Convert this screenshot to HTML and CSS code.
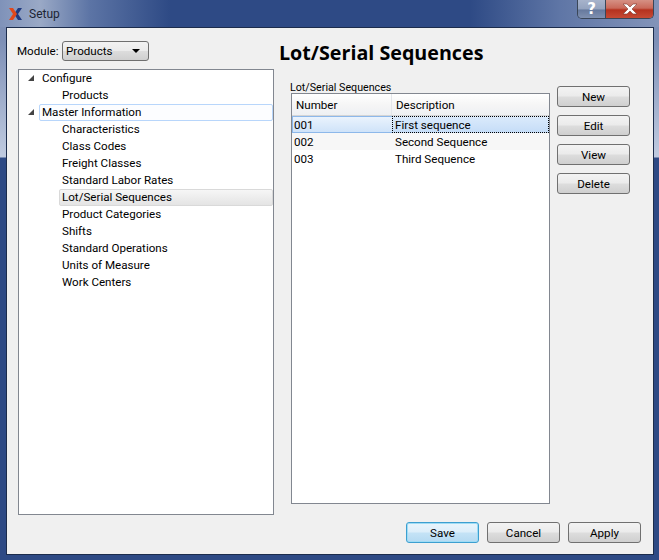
FILE: index.html
```html
<!DOCTYPE html>
<html lang="en">
<head>
<meta charset="utf-8">
<title>Setup</title>
<link rel="stylesheet" href="styles.css">
</head>
<body>
<div class="window">
  <header class="titlebar">
    <svg class="app-icon" width="14" height="12" viewBox="0 0 14 12">
      <polygon points="9,0 13,0 9,6 13,12 9,12 5,6" fill="#1f3a80"/>
      <polygon points="0,0 4,0 8,6 4,12 0,12 4,6" fill="#e0481c"/>
    </svg>
    <span class="title">Setup</span>
    <div class="caption">
      <div class="cap cap-help">?</div>
      <div class="cap cap-close">
        <svg width="16" height="12" viewBox="0 0 16 12">
          <path d="M1 1h4l3 3 3-3h4l-5 5 5 5h-4L8 8l-3 3H1l5-5z" fill="#fff" stroke="#7a3a30" stroke-width=".6"/>
        </svg>
      </div>
    </div>
  </header>
  <main class="client">
    <div class="top">
      <section class="left">
        <div class="module">
          <label class="module-label">Module:</label>
          <div class="combo">
            <span>Products</span>
            <i class="combo-arrow"></i>
          </div>
        </div>
        <div class="tree">
          <div class="node"><svg class="twist" width="8" height="8" viewBox="0 0 8 8"><polygon points="7,1 7,7 1,7" fill="#444"/></svg><span class="cell">Configure</span></div>
          <div class="node child"><span class="cell">Products</span></div>
          <div class="node"><svg class="twist" width="8" height="8" viewBox="0 0 8 8"><polygon points="7,1 7,7 1,7" fill="#444"/></svg><span class="cell current">Master Information</span></div>
          <div class="node child"><span class="cell">Characteristics</span></div>
          <div class="node child"><span class="cell">Class Codes</span></div>
          <div class="node child"><span class="cell">Freight Classes</span></div>
          <div class="node child"><span class="cell">Standard Labor Rates</span></div>
          <div class="node child"><span class="cell selected">Lot/Serial Sequences</span></div>
          <div class="node child"><span class="cell">Product Categories</span></div>
          <div class="node child"><span class="cell">Shifts</span></div>
          <div class="node child"><span class="cell">Standard Operations</span></div>
          <div class="node child"><span class="cell">Units of Measure</span></div>
          <div class="node child"><span class="cell">Work Centers</span></div>
        </div>
      </section>
      <section class="right">
        <h1 class="heading">Lot/Serial Sequences</h1>
        <div class="panel">
          <div class="group">
            <div class="group-label">Lot/Serial Sequences</div>
            <div class="table">
              <div class="thead">
                <div class="th col-num">Number</div>
                <div class="th col-desc">Description</div>
              </div>
              <div class="row row-sel">
                <div class="td col-num num-sel">001</div>
                <div class="td col-desc desc-sel">First sequence</div>
              </div>
              <div class="row row-alt">
                <div class="td col-num">002</div>
                <div class="td col-desc">Second Sequence</div>
              </div>
              <div class="row">
                <div class="td col-num">003</div>
                <div class="td col-desc">Third Sequence</div>
              </div>
            </div>
          </div>
          <div class="actions">
            <button class="btn">New</button>
            <button class="btn">Edit</button>
            <button class="btn">View</button>
            <button class="btn">Delete</button>
          </div>
        </div>
      </section>
    </div>
    <footer class="footer">
      <button class="btn btn-default">Save</button>
      <button class="btn">Cancel</button>
      <button class="btn">Apply</button>
    </footer>
  </main>
</div>
</body>
</html>
```

FILE: styles.css
```css
* { box-sizing: border-box; }
html, body { margin: 0; padding: 0; }
body {
  width: 659px;
  height: 560px;
  overflow: hidden;
  background: #2e4a85;
  font-family: Roboto, "Open Sans", sans-serif;
  font-size: 11.6px;
  color: #000;
}
.window {
  width: 659px;
  height: 560px;
  display: flex;
  flex-direction: column;
  padding: 0 5px 5px 6px;
  background: linear-gradient(180deg, #7d8fb6 0, #7d8fb6 40px, #c0cbe0 157px, #2e4a85 158px, #2e4a85 100%);
}
.titlebar {
  height: 27px;
  margin: 0 -5px 0 -6px;
  padding: 0 0 0 9px;
  display: flex;
  align-items: center;
  background: linear-gradient(90deg, #7f92b9 0, #9aa9c6 40px, #5c74a5 90px, #2e4a85 170px, #2e4a85 470px, #5f76a6 560px, #8394b9 659px);
}
.app-icon { margin-right: 6px; margin-top: 1px; flex: none; }
.title { color: #1c2434; font-size: 12px; margin-top: 1px; }
.caption {
  margin-left: auto;
  margin-right: 5px;
  align-self: flex-start;
  display: flex;
  height: 19px;
  border: 1px solid #3a4658;
  border-top: 0;
  border-radius: 0 0 5px 5px;
  overflow: hidden;
}
.cap {
  display: flex;
  align-items: center;
  justify-content: center;
}
.cap-help {
  width: 28px;
  border-right: 1px solid #3a4658;
  color: #fff;
  font: bold 15px "DejaVu Sans", sans-serif;
  background: linear-gradient(180deg, #a7b3cb 0, #94a3bf 50%, #66799d 55%, #7f90b0 100%);
}
.cap-close {
  width: 47px;
  background: linear-gradient(180deg, #d59084 0, #c9695a 45%, #b5321f 55%, #c64a34 100%);
}
.client {
  flex: 1;
  display: flex;
  flex-direction: column;
  background: #f0f0f0;
  border: 1px solid #1c2c4c;
  padding: 13px 12px 11px 11px;
}
.top {
  flex: 1;
  display: flex;
  min-height: 0;
}
.left {
  width: 256px;
  display: flex;
  flex-direction: column;
}
.module {
  display: flex;
  align-items: center;
  height: 20px;
  margin-bottom: 8px;
}
.module-label { width: 44px; margin-left: -1px; margin-right: 1px; }
.combo {
  width: 87px;
  height: 20px;
  display: flex;
  align-items: center;
  justify-content: space-between;
  padding: 0 8px 0 3px;
  border: 1px solid #6f6f6f;
  border-radius: 3px;
  background: linear-gradient(180deg, #f2f2f2 0, #ebebeb 48%, #dcdcdc 52%, #cfcfcf 100%);
}
.combo-arrow {
  width: 0;
  height: 0;
  border-left: 4px solid transparent;
  border-right: 4px solid transparent;
  border-top: 4px solid #000;
}
.tree {
  height: 446px;
  background: #fff;
  border: 1px solid #828790;
}
.node {
  height: 17px;
  display: flex;
  align-items: center;
  position: relative;
  padding-left: 20px;
}
.twist { position: absolute; left: 8px; top: 4px; }
.child { padding-left: 40px; }
.cell {
  flex: 1;
  height: 17px;
  line-height: 15px;
  padding-left: 3px;
  border: 1px solid transparent;
  border-left-width: 0;
}
.current {
  background: #fcfdff;
  border: 1px solid #b8d6fb;
  border-radius: 2px;
  padding-left: 2px;
}
.selected {
  background: linear-gradient(180deg, #f6f6f6, #e4e4e4);
  border: 1px solid #d9d9d9;
  border-radius: 2px;
  padding-left: 2px;
}
.right {
  flex: 1;
  padding-left: 5px;
  min-width: 0;
}
.heading {
  margin: 0;
  height: 40px;
  font-size: 19.7px;
  line-height: 24px;
  font-weight: 700;
  font-family: "Open Sans", sans-serif;
}
.panel {
  display: flex;
  padding-left: 12px;
}
.group { width: 259px; }
.group-label {
  height: 12px;
  font-size: 10.7px;
  line-height: 14px;
  margin-left: -1px;
}
.table {
  height: 411px;
  background: #fff;
  border: 1px solid #828790;
}
.thead {
  display: flex;
  height: 22px;
  background: linear-gradient(180deg, #fff 0, #f6f6f6 50%, #eef0f3 100%);
  border-bottom: 1px solid #d5d5d5;
}
.th {
  line-height: 23px;
  padding-left: 4px;
}
.th.col-num { border-right: 1px solid #e3e6ea; }
.col-num { width: 100px; }
.col-desc { flex: 1; }
.row {
  display: flex;
  height: 17px;
  line-height: 18px;
}
.row-alt { background: #f7f7f7; }
.td { padding-left: 2px; }
.td.col-desc { padding-left: 3px; }
.num-sel {
  background: linear-gradient(180deg, #eaf3fd, #cfe3f9);
  border: 1px solid #8db8ea;
  border-right: 0;
  padding-left: 1px;
  line-height: 16px;
}
.desc-sel {
  background: linear-gradient(180deg, #dcebfc, #c4dcf7);
  outline: 1px dotted #000;
  outline-offset: -1px;
}
.actions {
  display: flex;
  flex-direction: column;
  gap: 8px;
  margin: 5px 0 0 7px;
}
.btn {
  width: 73px;
  height: 21px;
  padding: 0;
  font: inherit;
  color: #000;
  border: 1px solid #707070;
  border-radius: 3px;
  background: linear-gradient(180deg, #f3f3f3 0, #ebebeb 48%, #dddddd 52%, #cfcfcf 100%);
}
.footer {
  display: flex;
  justify-content: flex-end;
  gap: 8px;
  margin-top: 7px;
}
.btn-default {
  border: 1px solid #3c9fd0;
  box-shadow: inset 0 0 0 1px #9fdcf5;
  background: linear-gradient(180deg, #e9f5fc 0, #dceefa 48%, #c4e3f6 52%, #b5daf2 100%);
}
```
